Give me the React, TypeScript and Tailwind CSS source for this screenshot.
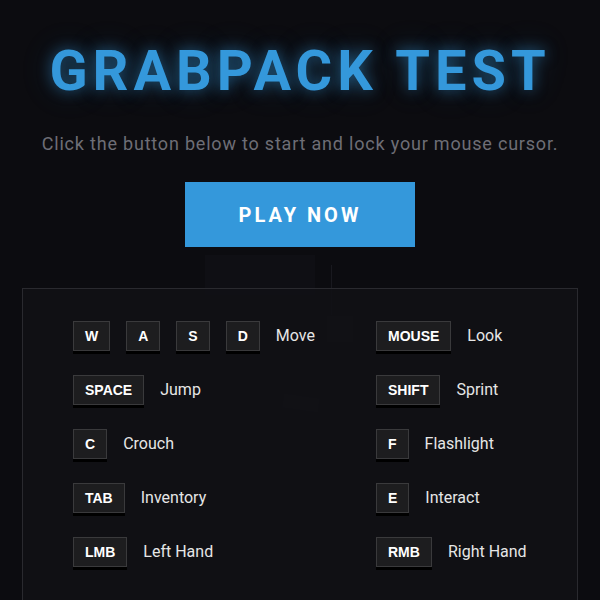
import React from "react";

type Binding = { keys: string[]; label: string };

const leftColumn: Binding[] = [
  { keys: ["W", "A", "S", "D"], label: "Move" },
  { keys: ["SPACE"], label: "Jump" },
  { keys: ["C"], label: "Crouch" },
  { keys: ["TAB"], label: "Inventory" },
  { keys: ["LMB"], label: "Left Hand" },
];

const rightColumn: Binding[] = [
  { keys: ["MOUSE"], label: "Look" },
  { keys: ["SHIFT"], label: "Sprint" },
  { keys: ["F"], label: "Flashlight" },
  { keys: ["E"], label: "Interact" },
  { keys: ["RMB"], label: "Right Hand" },
];

const Key: React.FC<{ k: string }> = ({ k }) => (
  <span className="inline-block border border-[#3a3a3c] bg-[#1d1d1f] px-[11px] py-1 text-center font-['Liberation_Sans',Arial,sans-serif] text-[14px] font-bold leading-5 text-white shadow-[0_3px_0_#000]">
    {k}
  </span>
);

const Row: React.FC<{ b: Binding }> = ({ b }) => (
  <div className="flex h-[34px] items-center gap-4">
    {b.keys.map((k) => (
      <Key key={k} k={k} />
    ))}
    <span className="text-[16px] text-[#e6e6e6]">{b.label}</span>
  </div>
);

const App: React.FC = () => {
  return (
    <div className="relative h-[600px] w-[600px] overflow-hidden bg-[#0c0c10] font-['Roboto',sans-serif]">
      {/* faint scene behind the menu */}
      <div className="pointer-events-none absolute inset-0">
        <div className="absolute left-[205px] top-[255px] h-[40px] w-[110px] bg-[#0f0f14]" />
        <div className="absolute left-[331px] top-[265px] h-[50px] w-px bg-[#19191f]" />
        <div className="absolute left-[327px] top-[316px] h-[26px] w-[26px] bg-[#17171c]" />
        <div className="absolute left-[283px] top-[396px] h-[14px] w-[36px] rotate-[8deg] bg-[#15151a]" />
      </div>

      <div className="relative flex flex-col items-center">
        <h1 className="mt-[43px] text-[56px] font-bold leading-[56px] tracking-[5px] text-[#3498db] [text-shadow:0_0_14px_rgba(52,152,219,0.5),0_0_30px_rgba(52,152,219,0.25)]">
          GRABPACK TEST
        </h1>
        <p className="mt-[33px] text-[18px] leading-6 tracking-[0.8px] text-[#6e6e76]">
          Click the button below to start and lock your mouse cursor.
        </p>
        <button className="mt-[26px] flex h-[65px] w-[230px] items-center justify-center bg-[#3498db] text-[20px] font-bold tracking-[3px] text-white">
          PLAY NOW
        </button>

        <div className="mt-[41px] grid w-[556px] grid-cols-[303px_1fr] border border-[#2a2a2f] bg-[#111115]/90 pb-[40px] pl-[50px] pt-[30px]">
          <div className="flex flex-col gap-5">
            {leftColumn.map((b) => (
              <Row key={b.label} b={b} />
            ))}
          </div>
          <div className="flex flex-col gap-5">
            {rightColumn.map((b) => (
              <Row key={b.label} b={b} />
            ))}
          </div>
        </div>
      </div>
    </div>
  );
};

export default App;
